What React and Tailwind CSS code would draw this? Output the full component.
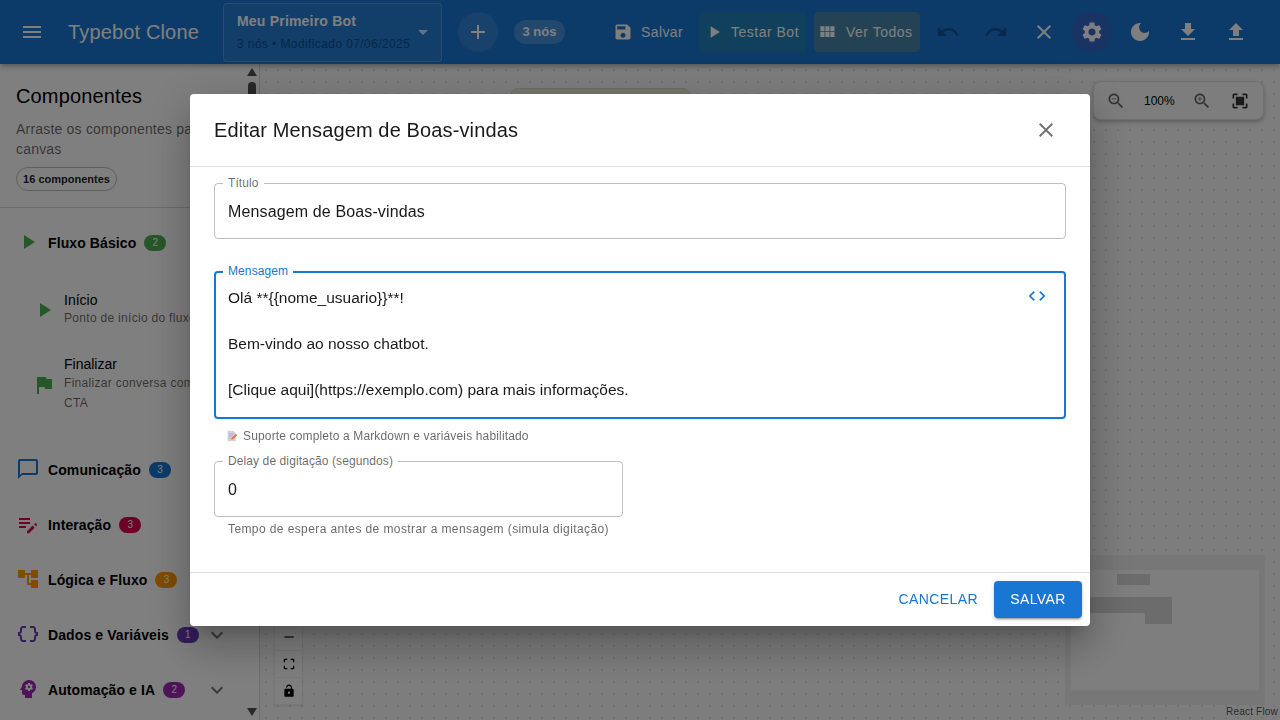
const P = {
  menu: "M3 18h18v-2H3v2zm0-5h18v-2H3v2zm0-7v2h18V6H3z",
  add: "M19 13h-6v6h-2v-6H5v-2h6V5h2v6h6v2z",
  save: "M17 3H5c-1.11 0-2 .9-2 2v14c0 1.1.89 2 2 2h14c1.1 0 2-.9 2-2V7l-4-4zm-5 16c-1.66 0-3-1.34-3-3s1.34-3 3-3 3 1.34 3 3-1.34 3-3 3zm3-10H5V5h10v4z",
  play: "M8 5v14l11-7z",
  grid: "M4 11h5V5H4v6zm0 7h5v-6H4v6zm6 0h5v-6h-5v6zm6 0h5v-6h-5v6zm-6-7h5V5h-5v6zm6-6v6h5V5h-5z",
  undo: "M12.5 8c-2.65 0-5.05.99-6.9 2.6L2 7v9h9l-3.62-3.62c1.39-1.16 3.16-1.88 5.12-1.88 3.54 0 6.55 2.31 7.6 5.5l2.37-.78C21.08 11.03 17.15 8 12.5 8z",
  redo: "M18.4 10.6C16.55 8.99 14.15 8 11.5 8c-4.65 0-8.58 3.03-9.96 7.22L3.9 16c1.05-3.19 4.05-5.5 7.6-5.5 1.95 0 3.73.72 5.12 1.88L13 16h9V7l-3.6 3.6z",
  close: "M19 6.41 17.59 5 12 10.59 6.41 5 5 6.41 10.59 12 5 17.59 6.41 19 12 13.41 17.59 19 19 17.59 13.41 12z",
  settings: "M19.14 12.94c.04-.3.06-.61.06-.94 0-.32-.02-.64-.07-.94l2.03-1.58c.18-.14.23-.41.12-.61l-1.92-3.32c-.12-.22-.37-.29-.59-.22l-2.39.96c-.5-.38-1.03-.7-1.62-.94l-.36-2.54c-.04-.24-.24-.41-.48-.41h-3.84c-.24 0-.43.17-.47.41l-.36 2.54c-.59.24-1.13.57-1.62.94l-2.39-.96c-.22-.08-.47 0-.59.22L2.74 8.87c-.12.21-.08.47.12.61l2.03 1.58c-.05.3-.09.63-.09.94s.02.64.07.94l-2.03 1.58c-.18.14-.23.41-.12.61l1.92 3.32c.12.22.37.29.59.22l2.39-.96c.5.38 1.03.7 1.62.94l.36 2.54c.05.24.24.41.48.41h3.84c.24 0 .44-.17.47-.41l.36-2.54c.59-.24 1.13-.56 1.62-.94l2.39.96c.22.08.47 0 .59-.22l1.92-3.32c.12-.22.07-.47-.12-.61l-2.01-1.58zM12 15.6c-1.98 0-3.6-1.62-3.6-3.6s1.62-3.6 3.6-3.6 3.6 1.62 3.6 3.6-1.62 3.6-3.6 3.6z",
  moon: "M12 3c-4.97 0-9 4.03-9 9s4.03 9 9 9 9-4.03 9-9c0-.46-.04-.92-.1-1.36-.98 1.37-2.58 2.26-4.4 2.26-2.98 0-5.4-2.42-5.4-5.4 0-1.81.89-3.42 2.26-4.4-.44-.06-.9-.1-1.36-.1z",
  download: "M5 20h14v-2H5v2zM19 9h-4V3H9v6H5l7 7 7-7z",
  upload: "M5 20h14v-2H5v2zm0-10h4v6h6v-6h4l-7-7-7 7z",
  zoomOut: "M15.5 14h-.79l-.28-.27C15.41 12.59 16 11.11 16 9.5 16 5.91 13.09 3 9.5 3S3 5.91 3 9.5 5.91 16 9.5 16c1.61 0 3.09-.59 4.23-1.57l.27.28v.79l5 4.99L20.49 19l-4.99-5zm-6 0C7.01 14 5 11.99 5 9.5S7.01 5 9.5 5 14 7.01 14 9.5 11.99 14 9.5 14zM7 9h5v1H7z",
  zoomIn: "M15.5 14h-.79l-.28-.27C15.41 12.59 16 11.11 16 9.5 16 5.91 13.09 3 9.5 3S3 5.91 3 9.5 5.91 16 9.5 16c1.61 0 3.09-.59 4.23-1.57l.27.28v.79l5 4.99L20.49 19l-4.99-5zm-6 0C7.01 14 5 11.99 5 9.5S7.01 5 9.5 5 14 7.01 14 9.5 11.99 14 9.5 14zm.5-7H9v2H7v1h2v2h1v-2h2V9h-2z",
  fit: "M3 5v4h2V5h4V3H5c-1.1 0-2 .9-2 2zm2 10H3v4c0 1.1.9 2 2 2h4v-2H5v-4zm14 4h-4v2h4c1.1 0 2-.9 2-2v-4h-2v4zm0-16h-4v2h4v4h2V5c0-1.1-.9-2-2-2zM7 7h10v10H7z",
  corners: "M3 5v4h2V5h4V3H5c-1.1 0-2 .9-2 2zm2 10H3v4c0 1.1.9 2 2 2h4v-2H5v-4zm14 4h-4v2h4c1.1 0 2-.9 2-2v-4h-2v4zm0-16h-4v2h4v4h2V5c0-1.1-.9-2-2-2z",
  minus: "M4 11h16v2H4z",
  lock: "M18 8h-1V6c0-2.76-2.24-5-5-5S7 3.24 7 6h2c0-1.66 1.34-3 3-3s3 1.34 3 3v2H6c-1.1 0-2 .9-2 2v10c0 1.1.9 2 2 2h12c1.1 0 2-.9 2-2V10c0-1.1-.9-2-2-2zm-6 9c-1.1 0-2-.9-2-2s.9-2 2-2 2 .9 2 2-.9 2-2 2z",
  chat: "M20 2H4c-1.1 0-2 .9-2 2v18l4-4h14c1.1 0 2-.9 2-2V4c0-1.1-.9-2-2-2zm0 14H6l-2 2V4h16v12z",
  editNote: "M3 10h11v2H3zm0-4h11v2H3zm0 8h7v2H3zm15.01-1.87.71-.71c.39-.39 1.02-.39 1.41 0l.71.71c.39.39.39 1.02 0 1.41l-.71.71zM16.6 13.54l2.12 2.12L13.12 21.26H11v-2.12z",
  tree: "M22 11V3h-7v3H9V3H2v8h7V8h2v10h4v3h7v-8h-7v3h-2V8h2v3z",
  braces: "M4 7v2c0 .55-.45 1-1 1H2v4h1c.55 0 1 .45 1 1v2c0 1.65 1.35 3 3 3h3v-2H7c-.55 0-1-.45-1-1v-2c0-1.3-.84-2.42-2-2.83v-.34C5.16 11.42 6 10.3 6 9V7c0-.55.45-1 1-1h3V4H7C5.35 4 4 5.35 4 7zM21 10c-.55 0-1-.45-1-1V7c0-1.65-1.35-3-3-3h-3v2h3c.55 0 1 .45 1 1v2c0 1.3.84 2.42 2 2.83v.34c-1.16.41-2 1.52-2 2.83v2c0 .55-.45 1-1 1h-3v2h3c1.65 0 3-1.35 3-3v-2c0-.55.45-1 1-1h1v-4h-1z",
  brain: "M13 3C9.23 3 6.19 5.95 6 9.66l-1.92 2.53c-.24.31 0 .81.42.81H6v3c0 1.11.89 2 2 2h1v3h7v-4.68c2.36-1.12 4-3.53 4-6.32 0-3.87-3.13-7-7-7zm3 7c0 .13-.01.26-.03.39l.83.66c.08.06.1.16.05.25l-.8 1.39c-.05.09-.16.12-.24.09l-.99-.4c-.21.16-.43.29-.67.39L14 13.83c-.01.1-.1.17-.2.17h-1.6c-.1 0-.18-.07-.2-.17l-.15-1.06c-.25-.1-.47-.23-.68-.39l-.99.4c-.09.03-.2 0-.25-.09l-.8-1.39c-.05-.08-.03-.19.05-.25l.84-.66c-.02-.13-.02-.26-.02-.39s.02-.27.04-.39l-.85-.66c-.08-.06-.1-.16-.05-.26l.8-1.38c.05-.09.15-.12.24-.09l1 .4c.2-.15.43-.29.67-.39l.15-1.06c.02-.1.1-.17.2-.17h1.6c.1 0 .18.07.2.17l.15 1.06c.24.1.46.23.67.39l1-.4c.09-.03.2 0 .24.09l.8 1.38c.05.09.03.2-.05.26l-.85.66c.03.12.04.25.04.39zm-3-1.2c-.66 0-1.2.54-1.2 1.2s.54 1.2 1.2 1.2 1.2-.54 1.2-1.2-.54-1.2-1.2-1.2z",
  flag: "M14.4 6 14 4H5v17h2v-7h5.6l.4 2h7V6z",
  code: "M9.4 16.6 4.8 12l4.6-4.6L8 6l-6 6 6 6 1.4-1.4zm5.2 0 4.6-4.6-4.6-4.6L16 6l6 6-6 6-1.4-1.4z",
  expand: "M16.59 8.59 12 13.17 7.41 8.59 6 10l6 6 6-6z",
  caret: "M7 10l5 5 5-5z",
};

function Icon({ d, className = "w-6 h-6" }) {
  return (
    <svg viewBox="0 0 24 24" fill="currentColor" className={className}>
      <path d={d} />
    </svg>
  );
}

function IconBtn({ d, className = "text-white", bg = "" }) {
  return (
    <div className={`w-10 h-10 mr-2 rounded-full flex items-center justify-center shrink-0 ${bg} ${className}`}>
      <Icon d={d} />
    </div>
  );
}

function Header() {
  return (
    <header className="h-16 shrink-0 bg-[#1976d2] text-white flex items-center pl-5 shadow-[0_2px_4px_-1px_rgba(0,0,0,0.2),0_4px_5px_0_rgba(0,0,0,0.14)] relative z-10">
      <Icon d={P.menu} />
      <div className="ml-6 text-xl tracking-[0.15px] w-[155px] shrink-0">Typebot Clone</div>
      <div className="w-[219px] h-[59px] shrink-0 rounded border border-white/20 bg-white/5 pl-[13px] pr-[6px] flex items-center justify-between">
        <div>
          <div className="text-sm tracking-[0.2px] leading-[20px] font-bold">Meu Primeiro Bot</div>
          <div className="text-xs tracking-[0.4px] leading-[20px] mt-[3px] text-[#0e4c8c] whitespace-nowrap">3 nós • Modificado 07/06/2025</div>
        </div>
        <Icon d={P.caret} className="w-6 h-6 text-white/80" />
      </div>
      <div className="ml-4 w-10 h-10 rounded-full bg-white/10 flex items-center justify-center shrink-0">
        <Icon d={P.add} />
      </div>
      <div className="ml-4 w-[51px] h-6 rounded-full bg-white/20 flex items-center justify-center text-[13px] font-bold shrink-0">3 nós</div>
      <div className="ml-[48px] flex items-center gap-2 w-[71px] shrink-0 text-sm tracking-[0.4px]">
        <Icon d={P.save} className="w-5 h-5 shrink-0" />
        <span>Salvar</span>
      </div>
      <div className="ml-[15px] w-[107px] h-10 rounded bg-[#4caf50]/20 flex items-center pl-[5px] gap-[7px] text-sm tracking-[0.5px] shrink-0">
        <Icon d={P.play} className="w-5 h-5 shrink-0" />
        <span>Testar Bot</span>
      </div>
      <div className="ml-2 w-[106px] h-10 rounded bg-[#ffc107]/20 flex items-center pl-[3px] gap-[9px] text-sm tracking-[0.5px] shrink-0">
        <Icon d={P.grid} className="w-5 h-5 shrink-0" />
        <span>Ver Todos</span>
      </div>
      <div className="ml-2 flex">
        <IconBtn d={P.undo} className="text-black/30" />
        <IconBtn d={P.redo} className="text-black/30" />
        <IconBtn d={P.close} />
        <IconBtn d={P.settings} bg="bg-[#9c27b0]/20" />
        <IconBtn d={P.moon} />
        <IconBtn d={P.download} />
        <IconBtn d={P.upload} />
      </div>
    </header>
  );
}

const sections = [
  { name: "Comunicação", count: 3, d: P.chat, color: "text-[#1976d2]", badge: "bg-[#1976d2]" },
  { name: "Interação", count: 3, d: P.editNote, color: "text-[#dc004e]", badge: "bg-[#dc004e]" },
  { name: "Lógica e Fluxo", count: 3, d: P.tree, color: "text-[#ff9800]", badge: "bg-[#ff9800]" },
  { name: "Dados e Variáveis", count: 1, d: P.braces, color: "text-[#673ab7]", badge: "bg-[#673ab7]", chevron: true },
  { name: "Automação e IA", count: 2, d: P.brain, color: "text-[#9c27b0]", badge: "bg-[#9c27b0]", chevron: true },
];

function Badge({ value, className }) {
  return (
    <span className={`ml-2 w-[22px] h-4 rounded-full text-white text-[10px] font-medium flex items-center justify-center shrink-0 ${className}`}>
      {value}
    </span>
  );
}

function Sidebar() {
  return (
    <aside className="w-[260px] shrink-0 bg-white border-r border-black/15 flex overflow-hidden">
      <div className="flex-1 min-w-0">
        <div className="h-[144px] border-b border-black/15 pl-4 pt-5">
          <h2 className="text-xl tracking-[0.15px] leading-6 text-black">Componentes</h2>
          <p className="mt-[11px] text-sm tracking-[0.2px] leading-5 text-black/60 w-[214px]">Arraste os componentes para o canvas</p>
          <div className="mt-[8px] w-[101px] h-6 rounded-full border border-black/25 flex items-center justify-center text-[11px] font-bold text-black/90">
            16 componentes
          </div>
        </div>
        <div className="h-[69px] flex items-center pl-4">
          <Icon d={P.play} className="w-6 h-6 text-[#4caf50] -mt-[2px]" />
          <span className="ml-2 text-sm font-bold tracking-[0.1px] text-black">Fluxo Básico</span>
          <Badge value={2} className="bg-[#4caf50]" />
        </div>
        <div className="mt-[13px] pl-8 flex items-center">
          <Icon d={P.play} className="w-6 h-6 text-[#4caf50] shrink-0 mt-[3px]" />
          <div className="ml-2">
            <div className="text-sm leading-5 text-black">Início</div>
            <div className="text-xs leading-[17px] tracking-[0.3px] text-black/60 whitespace-nowrap">Ponto de início do fluxo</div>
          </div>
        </div>
        <div className="mt-[27px] pl-8 flex items-center">
          <Icon d={P.flag} className="w-6 h-6 text-[#4caf50] shrink-0 mt-[2px]" />
          <div className="ml-2">
            <div className="text-sm leading-5 text-black">Finalizar</div>
            <div className="-mt-[1px] text-xs leading-5 tracking-[0.3px] text-black/60 w-[140px]">Finalizar conversa com CTA</div>
          </div>
        </div>
        <div className="mt-[29px]">
          {sections.map((s) => (
            <div key={s.name} className="h-[55px] flex items-center pl-4 pr-[15px]">
              <Icon d={s.d} className={`w-6 h-6 shrink-0 -mt-[2px] ${s.color}`} />
              <span className="ml-2 text-sm font-bold tracking-[0.1px] text-black whitespace-nowrap">{s.name}</span>
              <Badge value={s.count} className={s.badge} />
              {s.chevron && <Icon d={P.expand} className="w-6 h-6 ml-auto text-black/55" />}
            </div>
          ))}
        </div>
      </div>
      <div className="w-[15px] shrink-0 flex flex-col items-center pt-[4px] pb-[4px] text-[#505050]">
        <svg viewBox="0 0 10 8" className="w-[10px] h-2 fill-current"><path d="M5 0l5 8H0z" /></svg>
        <div className="w-2 h-[440px] mt-[6px] rounded-full bg-[#505050]" />
        <svg viewBox="0 0 10 8" className="w-[10px] h-2 mt-auto fill-current"><path d="M5 8L0 0h10z" /></svg>
      </div>
    </aside>
  );
}

function Canvas() {
  return (
    <main className="flex-1 relative overflow-hidden bg-[#fafafa] bg-[radial-gradient(#e6e6e8_1px,transparent_1px)] bg-[length:12px_12px]">
      <div className="absolute left-[250px] top-[24px] w-[181px] h-[80px] rounded-lg bg-[#e9ebd8] border border-[#dcdcc8]" />
      <div className="absolute right-[16px] top-[17px] w-[171px] h-[39px] rounded-lg bg-[#fbfbfb] border border-black/10 shadow-[0_2px_4px_rgba(0,0,0,0.25)] flex items-center text-black/60">
        <Icon d={P.zoomOut} className="w-5 h-5 ml-[12px]" />
        <span className="ml-[18px] w-[31px] text-xs text-black">100%</span>
        <Icon d={P.zoomIn} className="w-5 h-5 ml-[17px]" />
        <Icon d={P.fit} className="w-5 h-5 ml-[18px] text-black/80" />
      </div>
      <div className="absolute left-[15px] bottom-[15px] w-[27px] bg-[#fcfcfc] shadow-[0_0_2px_1px_rgba(0,0,0,0.08)] text-black">
        {[P.add, P.minus, P.corners, P.lock].map((d, i) => (
          <div key={i} className="h-[27px] flex items-center justify-center border-b border-[#eeeeee]">
            <Icon d={d} className="w-[14px] h-[14px]" />
          </div>
        ))}
      </div>
      <div className="absolute right-[15px] bottom-[15px] w-[200px] h-[150px] bg-[#eeeeee] px-[6px] py-[15px]">
        <div className="w-full h-full bg-[#fdfdfd] flex flex-col">
          <div className="w-[33px] h-[11px] ml-[46px] mt-[4px] bg-[#d8d8d8] shrink-0" />
          <div className="w-[101px] h-4 mt-[12px] bg-[#d8d8d8] shrink-0" />
          <div className="w-[27px] h-[11px] ml-[74px] bg-[#d8d8d8] shrink-0" />
        </div>
      </div>
      <div className="absolute right-[2px] bottom-[2px] text-[10px] tracking-[0.2px] leading-[12px] text-black/70">React Flow</div>
    </main>
  );
}

function Field({ label, focused, className = "", children }) {
  const border = focused ? "border-2 border-[#1976d2]" : "border border-black/25";
  return (
    <div className={`relative rounded ${border} ${className}`}>
      <span className={`absolute ${focused ? "left-[7px] -top-[9px]" : "left-[8px] -top-[8px]"} bg-white px-[5px] text-xs tracking-[0.1px] leading-[14px] whitespace-nowrap ${focused ? "text-[#1976d2]" : "text-black/60"}`}>
        {label}
      </span>
      {children}
    </div>
  );
}

function Memo() {
  return (
    <svg viewBox="0 0 16 16" className="w-3 h-3 shrink-0">
      <path d="M2 1h8l3 3v11H2z" fill="#d6cfe3" />
      <path d="M4 5h6M4 8h5M4 11h3" stroke="#a79dbd" strokeWidth="1" />
      <path d="M7 13l1-3 5-5 2 2-5 5z" fill="#f4762d" />
    </svg>
  );
}

function Dialog() {
  return (
    <div className="fixed inset-0 z-20 bg-black/50 flex items-start justify-center pt-[94px]">
      <div className="w-[900px] h-[532px] bg-white rounded flex flex-col shadow-[0_11px_15px_-7px_rgba(0,0,0,0.2),0_24px_38px_3px_rgba(0,0,0,0.14),0_9px_46px_8px_rgba(0,0,0,0.12)]">
        <div className="h-[73px] shrink-0 border-b border-[#e0e0e0] flex items-center justify-between pl-6 pr-[32px]">
          <h1 className="text-xl tracking-[0.13px] text-black/90">Editar Mensagem de Boas-vindas</h1>
          <Icon d={P.close} className="w-6 h-6 text-black/55" />
        </div>
        <div className="flex-1 px-6 pt-4 min-h-0">
          <Field label="Título" className="h-14 flex items-center pl-[13px] pt-[1px]">
            <span className="text-base tracking-[0.13px] text-black/90">Mensagem de Boas-vindas</span>
          </Field>
          <Field label="Mensagem" focused className="mt-8 h-[148px] relative pl-[12px] pt-[13px]">
            <div className="text-[15.5px] leading-[23px] text-black/90 whitespace-pre-line">
              {"Olá **{{nome_usuario}}**!\n\nBem-vindo ao nosso chatbot.\n\n[Clique aqui](https://exemplo.com) para mais informações."}
            </div>
            <div className="absolute right-[17px] top-[13px] text-[#1976d2]">
              <Icon d={P.code} className="w-5 h-5" />
            </div>
          </Field>
          <div className="mt-[9px] ml-3 flex items-center gap-[5px] text-xs tracking-[0.15px] leading-[16px] text-black/60">
            <Memo />
            <span>Suporte completo a Markdown e variáveis habilitado</span>
          </div>
          <Field label="Delay de digitação (segundos)" className="mt-[17px] w-[409px] h-14 flex items-center pl-[13px] pt-[1px]">
            <span className="text-base text-black/90">0</span>
          </Field>
          <div className="mt-[4px] ml-[14px] text-xs leading-[16px] text-black/60 tracking-[0.4px]">Tempo de espera antes de mostrar a mensagem (simula digitação)</div>
        </div>
        <div className="h-[54px] shrink-0 border-t border-[#e0e0e0] flex items-center justify-end pr-2">
          <span className="text-sm tracking-[0.4px] text-[#1976d2] mr-4 pb-[1px]">CANCELAR</span>
          <div className="w-[88px] h-[37px] rounded bg-[#1976d2] text-white text-sm font-medium flex items-center justify-center tracking-[0.4px] pb-[1px] shadow-[0_3px_1px_-2px_rgba(0,0,0,0.2),0_2px_2px_0_rgba(0,0,0,0.14),0_1px_5px_0_rgba(0,0,0,0.12)]">
            SALVAR
          </div>
        </div>
      </div>
    </div>
  );
}

export default function App() {
  return (
    <div className="h-screen flex flex-col overflow-hidden font-['Liberation_Sans',Arial,sans-serif]">
      <Header />
      <div className="flex-1 flex min-h-0">
        <Sidebar />
        <Canvas />
      </div>
      <Dialog />
    </div>
  );
}
